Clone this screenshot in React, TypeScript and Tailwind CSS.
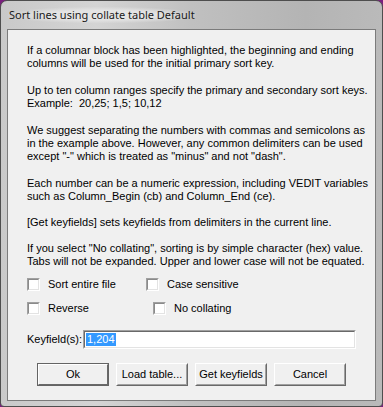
import React from "react";

const paragraphs = [
  [
    "If a columnar block has been highlighted, the beginning and ending",
    "columns will be used for the initial primary sort key.",
  ],
  [
    "Up to ten column ranges specify the primary and secondary sort keys.",
    "Example:  20,25; 1,5; 10,12",
  ],
  [
    "We suggest separating the numbers with commas and semicolons as",
    "in the example above. However, any common delimiters can be used",
    'except "-" which is treated as "minus" and not "dash".',
  ],
  [
    "Each number can be a numeric expression, including VEDIT variables",
    "such as Column_Begin (cb) and Column_End (ce).",
  ],
  ["[Get keyfields] sets keyfields from delimiters in the current line."],
  [
    'If you select "No collating", sorting is by simple character (hex) value.',
    "Tabs will not be expanded. Upper and lower case will not be equated.",
  ],
];

// gap above each paragraph
const paraGaps = ["mt-0", "mt-[14px]", "mt-[14px]", "mt-[14px]", "mt-[13px]", "mt-[13px]"];

function CheckBox({ label, width }: { label: string; width: string }) {
  return (
    <div className={`flex items-center gap-[8px] h-[13px] ${width}`}>
      <span className="block w-[13px] h-[13px] border border-t-[#a0a0a0] border-l-[#a0a0a0] border-b-white border-r-white">
        <span className="block w-full h-full border border-t-[#8a8a8a] border-l-[#8a8a8a] border-b-[#e3e3e3] border-r-[#e3e3e3] bg-white" />
      </span>
      <span>{label}</span>
    </div>
  );
}

function Button({ label, isDefault }: { label: string; isDefault?: boolean }) {
  if (isDefault) {
    return (
      <div className="w-[72px] h-[23px] border border-[#646464]">
        <div className="w-full h-full border border-t-white border-l-white border-b-[#696969] border-r-[#696969] bg-[#f0f0f0] flex items-center justify-center">
          {label}
        </div>
      </div>
    );
  }
  return (
    <div className="w-[72px] h-[23px] border border-t-white border-l-white border-b-[#696969] border-r-[#696969]">
      <div className="w-full h-full border border-t-[#f0f0f0] border-l-[#f0f0f0] border-b-[#a0a0a0] border-r-[#a0a0a0] bg-[#f0f0f0] flex items-center justify-center">
        {label}
      </div>
    </div>
  );
}

export default function App() {
  return (
    <div className="w-[383px] h-[407px] bg-[#7a1f7e] overflow-hidden">
      <div className="w-full h-full flex flex-col rounded-t-[7px] rounded-b-[4px] border border-[#4e4e4e] bg-[linear-gradient(90deg,#c9c9c9_0%,#d4d4d4_25%,#c0c0c0_50%,#b4b4b4_80%,#bababa_100%)] px-[6px] pb-[5px]">
        <div className="h-[28px] flex items-center pl-[1px] font-['Noto_Sans',sans-serif] text-[11px] text-[#1a1a1a]">
          <span className="px-[1px] bg-[radial-gradient(ellipse_at_center,#e4e4e4_40%,transparent_75%)]">
            Sort lines using collate table Default
          </span>
        </div>
        <div className="flex-1 border border-[#7b7b7b] bg-[#f0f0f0] font-['Liberation_Sans',sans-serif] text-[11px] leading-[13px] text-black pl-[19px] pt-[14px]">
          <div className="flex flex-col">
            {paragraphs.map((lines, i) => (
              <div key={i} className={paraGaps[i]}>
                {lines.map((line, j) => (
                  <div key={j} className="whitespace-pre">
                    {line}
                  </div>
                ))}
              </div>
            ))}
          </div>
          <div className="mt-[10px] flex flex-col gap-[11px]">
            <div className="flex">
              <CheckBox label="Sort entire file" width="w-[119px]" />
              <CheckBox label="Case sensitive" width="w-[120px]" />
            </div>
            <div className="flex">
              <CheckBox label="Reverse" width="w-[126px]" />
              <CheckBox label="No collating" width="w-[120px]" />
            </div>
          </div>
          <div className="mt-[15px] flex items-center">
            <span className="w-[56px] whitespace-nowrap">Keyfield(s):</span>
            <div className="w-[273px] h-[19px] border border-t-[#a0a0a0] border-l-[#a0a0a0] border-b-white border-r-white">
              <div className="w-full h-full border border-t-[#696969] border-l-[#696969] border-b-[#e3e3e3] border-r-[#e3e3e3] bg-white flex items-stretch pl-[1px] py-[1px]">
                <span className="bg-[#3399ff] text-white px-[1px] leading-[13px]">1,204</span>
              </div>
            </div>
          </div>
          <div className="mt-[14px] ml-[10px] flex gap-[7px]">
            <Button label="Ok" isDefault />
            <Button label="Load table..." />
            <Button label="Get keyfields" />
            <Button label="Cancel" />
          </div>
        </div>
      </div>
    </div>
  );
}
